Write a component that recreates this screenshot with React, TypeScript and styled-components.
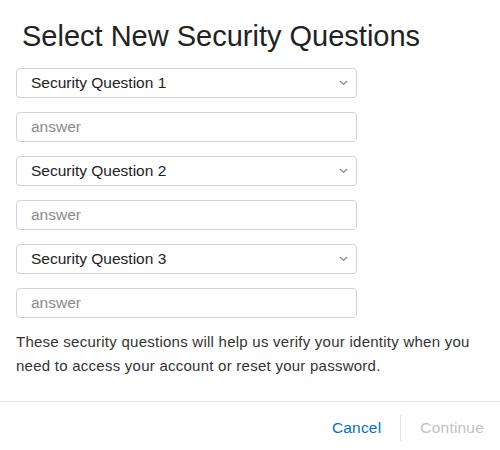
import React, { useState } from "react";
import styled, { createGlobalStyle } from "styled-components";

const GlobalStyle = createGlobalStyle`
  html, body {
    margin: 0;
    padding: 0;
    background: #fff;
    font-family: "Liberation Sans", Arial, sans-serif;
    color: #333;
  }
  * { box-sizing: border-box; }
`;

const Dialog = styled.div`
  width: 500px;
  height: 450px;
  display: flex;
  flex-direction: column;
`;

const Body = styled.div`
  padding: 16px 16px 0 16px;
  height: 401px;
`;

const Title = styled.h1`
  margin: 0 0 12px 6px;
  font-size: 29px;
  line-height: 40px;
  font-weight: 400;
  color: #222;
`;

const Fields = styled.div`
  display: flex;
  flex-direction: column;
  gap: 14px;
  width: 341px;
`;

const SelectBox = styled.div`
  position: relative;
  height: 30px;
  border: 1px solid #d2d2d6;
  border-radius: 4px;
  display: flex;
  align-items: center;
  padding: 0 14px;
  font-size: 15.5px;
  color: #222;
  background: #fff;
`;

const Chevron = styled.svg`
  position: absolute;
  right: 8px;
  top: 11px;
`;

const AnswerInput = styled.input`
  height: 30px;
  border: 1px solid #d2d2d6;
  border-radius: 4px;
  padding: 0 14px;
  font-family: inherit;
  font-size: 15.5px;
  color: #222;
  outline: none;
  &::placeholder {
    color: #8a8a8e;
  }
`;

const Note = styled.p`
  margin: 12px -4px 0 0;
  font-size: 15px;
  line-height: 24px;
  letter-spacing: 0.25px;
  color: #333;
`;

const Footer = styled.div`
  border-top: 1px solid #e3e3e3;
  flex: 1;
  display: flex;
  justify-content: flex-end;
  align-items: center;
  padding: 4px 16px 0 0;
`;

const Action = styled.button<{ $disabled?: boolean }>`
  background: none;
  border: none;
  padding: 0 19px;
  font-family: inherit;
  font-size: 15.5px;
  letter-spacing: 0.2px;
  color: ${(p) => (p.$disabled ? "#c2c2c2" : "#0070c9")};
  cursor: ${(p) => (p.$disabled ? "default" : "pointer")};
  &:last-child {
    padding-right: 0;
  }
`;

const Divider = styled.div`
  width: 1px;
  height: 26px;
  background: #e3e3e3;
`;

const questions = ["Security Question 1", "Security Question 2", "Security Question 3"];

export default function App() {
  const [answers, setAnswers] = useState(["", "", ""]);
  return (
    <Dialog>
      <GlobalStyle />
      <Body>
        <Title>Select New Security Questions</Title>
        <Fields>
          {questions.map((q, i) => (
            <React.Fragment key={q}>
              <SelectBox>
                {q}
                <Chevron width="9" height="6" viewBox="0 0 9 6">
                  <path d="M1 1l3.5 3.5L8 1" fill="none" stroke="#888" strokeWidth="1.1" />
                </Chevron>
              </SelectBox>
              <AnswerInput
                placeholder="answer"
                value={answers[i]}
                onChange={(e) => {
                  const next = [...answers];
                  next[i] = e.target.value;
                  setAnswers(next);
                }}
              />
            </React.Fragment>
          ))}
        </Fields>
        <Note>
          These security questions will help us verify your identity when you
          need to access your account or reset your password.
        </Note>
      </Body>
      <Footer>
        <Action>Cancel</Action>
        <Divider />
        <Action $disabled>Continue</Action>
      </Footer>
    </Dialog>
  );
}
